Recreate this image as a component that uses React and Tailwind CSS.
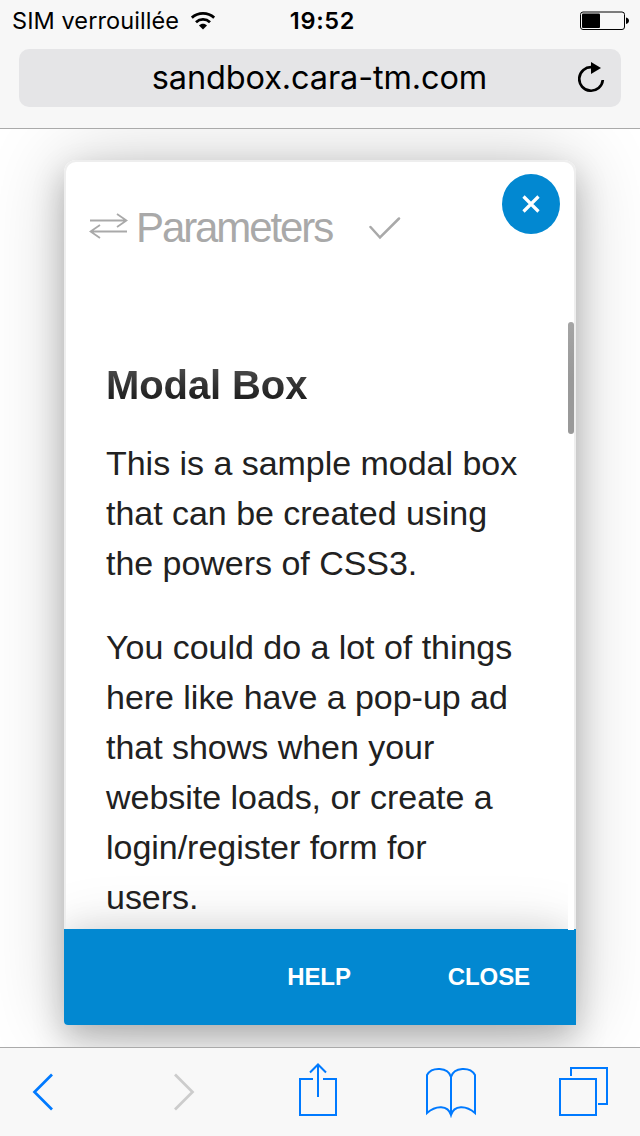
function StatusBar() {
  return (
    <div className="flex h-[41px] items-center justify-between pl-3 pr-[11px] text-[23.5px] leading-none text-black">
      <div className="flex w-60 items-center gap-[11px]">
        <span className="w-[168px] whitespace-nowrap tracking-[0.08px]">SIM verrouillée</span>
        <svg className="h-5 w-6 shrink-0" viewBox="0 0 24 20" fill="none" stroke="#000" strokeWidth="2.8">
          <path d="M.8 6.700C7 .9 17 .9 23.200 6.700" />
          <path d="M5 11.200c4-3.700 10-3.700 14 0" />
          <path d="M8 14.500c2.200-2.200 5.800-2.200 8 0l-4 4z" fill="#000" stroke="none" />
        </svg>
      </div>
      <span className="pl-1 font-semibold tracking-[0.7px]">19:52</span>
      <div className="flex w-60 justify-end">
        <svg className="h-5 w-[50px]" viewBox="0 0 50 20">
          <rect x="1.500" y="1" width="44" height="17.500" rx="2.500" fill="none" stroke="#000" />
          <rect x="3" y="2.500" width="18" height="14.500" rx="1" />
          <path d="M47 6.500c4 .5 4 6 0 6.500z" />
        </svg>
      </div>
    </div>
  );
}

function AddressBar() {
  return (
    <div className="mx-[19px] mt-2 flex h-[58px] items-center rounded-[10px] bg-[#e5e5e7] text-black">
      <span className="w-[42px]" />
      <span className="flex-1 text-center text-[32.500px] leading-none tracking-[-0.13px]">sandbox.cara-tm.com</span>
      <svg className="mr-[15px] h-8 w-7" viewBox="0 0 28 32" fill="none">
        <path d="M14 5.200a11.800 11.800 0 1 0 10.800 12.800" stroke="#000" strokeWidth="2.700" />
        <path d="M13 0l10 6-10 6z" fill="#000" />
      </svg>
    </div>
  );
}

function Modal() {
  return (
    <section className="relative flex h-[865px] w-[512px] flex-col rounded-t-[12px] rounded-bl-[4px] bg-white font-['Liberation_Sans',Arial,sans-serif] shadow-[0_0_80px_rgba(0,0,0,0.2),0_14px_32px_rgba(0,0,0,0.23)]">
      <header className="flex h-[162px] items-start rounded-t-[12px] border-2 border-b-0 border-[#eee] pl-[23px] pt-[40px] text-[#a9a9a9]">
        <svg className="mt-[11px] h-7 w-[39px]" viewBox="0 0 39 28" fill="none" stroke="currentColor" strokeWidth="1.800">
          <path d="M1 7.500h36M28 1l9.500 6.500L28 14M38 18.500H2M11 12l-9.500 6.500L11 25" />
        </svg>
        <h1 className="ml-2 mt-0.5 w-[200px] text-[42px] leading-[48px] tracking-[-2.100px]">Parameters</h1>
        <svg className="ml-[33px] mt-[14px] h-6 w-8" viewBox="0 0 32 24" fill="none" stroke="currentColor" strokeWidth="2.500" strokeLinecap="round">
          <path d="M1.500 11L11 21.500 30 2.500" />
        </svg>
      </header>
      <div className="flex h-[607px] justify-between border-x-2 border-[#eee] pl-[40px] text-[#212121]">
        <div className="w-[420px] pt-[38px]">
          <h2 className="bg-linear-to-b from-[#484848] from-20% to-[#212121] to-75% bg-clip-text text-[40px] font-bold leading-[50px] tracking-[-0.1px] text-transparent">Modal Box</h2>
          <p className="mt-[28px] whitespace-nowrap text-[34px] leading-[50px] tracking-[-0.03px]">
            This is a sample modal box<br />that can be created using<br />the powers of CSS3.
          </p>
          <p className="mt-[34px] whitespace-nowrap text-[34px] leading-[50px] tracking-[-0.03px]">
            You could do a lot of things<br />here like have a pop-up ad<br />that shows when your<br />website loads, or create a<br />login/register form for<br />users.
          </p>
        </div>
        <span className="h-[112px] w-1.5 rounded-full bg-linear-to-b from-[#a5a5a5] to-[#999] to-50%" />
      </div>
      <div className="pointer-events-none absolute bottom-24 left-[2px] h-14 w-[502px] overflow-hidden">
        <div className="mt-14 h-24 w-[502px] shadow-[0_0_60px_rgba(0,0,0,0.12),0_0_32px_rgba(0,0,0,0.11)]" />
      </div>
      <footer className="flex h-24 items-center justify-end rounded-bl-[4px] bg-[#0288d1] pr-[46px] text-[24px] font-bold tracking-[-0.1px] text-white">
        <button className="mr-[97px]">HELP</button>
        <button>CLOSE</button>
      </footer>
      <span className="absolute bottom-[95px] right-[2px] h-12 w-1.5 bg-white" />
      <button aria-label="Close" className="absolute right-4 top-[14px] flex h-[60px] w-[58px] items-center justify-center rounded-[50%] bg-[#0288d1]">
        <svg className="h-5 w-5" viewBox="0 0 20 20" stroke="#fff" strokeWidth="3.200">
          <path d="M2.500 2.500l15 15M17.500 2.500l-15 15" />
        </svg>
      </button>
    </section>
  );
}

function Toolbar() {
  return (
    <nav className="z-10 flex h-[89px] items-start border-t border-[#aaa] bg-[#f8f8f8] pl-[32px] pt-[14px] text-[#007aff]">
      <svg className="mt-[11px] h-10 w-[22px]" viewBox="0 0 22 40" fill="none" stroke="currentColor" strokeWidth="2.700"><path d="M20 1.500L2.500 19 20 36.500" /></svg>
      <svg className="ml-[119px] mt-[11px] h-10 w-[22px]" viewBox="0 0 22 40" fill="none" stroke="#ccc" strokeWidth="2.700"><path d="M2 1.500L19.500 19 2 36.500" /></svg>
      <svg className="ml-[104px] h-[54px] w-[38px]" viewBox="0 0 38 54" fill="none" stroke="currentColor" strokeWidth="2"><path d="M14 17H1v36h36V17H24M19 35V2.500M11 10.500l8-8 8 8" /></svg>
      <svg className="ml-[89px] h-[56px] w-[50px]" viewBox="0 0 50 56" fill="none" stroke="currentColor" strokeWidth="2"><path d="M25 53V15C22 5 6 4.500 1 13v38C10 43 22 43 25 53 28 43 40 43 49 51V13C44 4.500 28 5 25 15" /></svg>
      <svg className="ml-[83px] h-[54px] w-[50px]" viewBox="0 0 50 54" fill="none" stroke="currentColor" strokeWidth="2"><path d="M1 17h36v36H1zM12 14V6h36v36h-9" /></svg>
    </nav>
  );
}

export default function App() {
  return (
    <div className="flex h-[1136px] w-[640px] flex-col overflow-hidden bg-white font-['Inter',sans-serif]">
      <div className="z-10 h-[129px] shrink-0 border-b border-[#aaa] bg-[#f7f7f7]">
        <StatusBar />
        <AddressBar />
      </div>
      <main className="flex h-[918px] shrink-0 justify-center pt-[31px]">
        <Modal />
      </main>
      <Toolbar />
    </div>
  );
}
